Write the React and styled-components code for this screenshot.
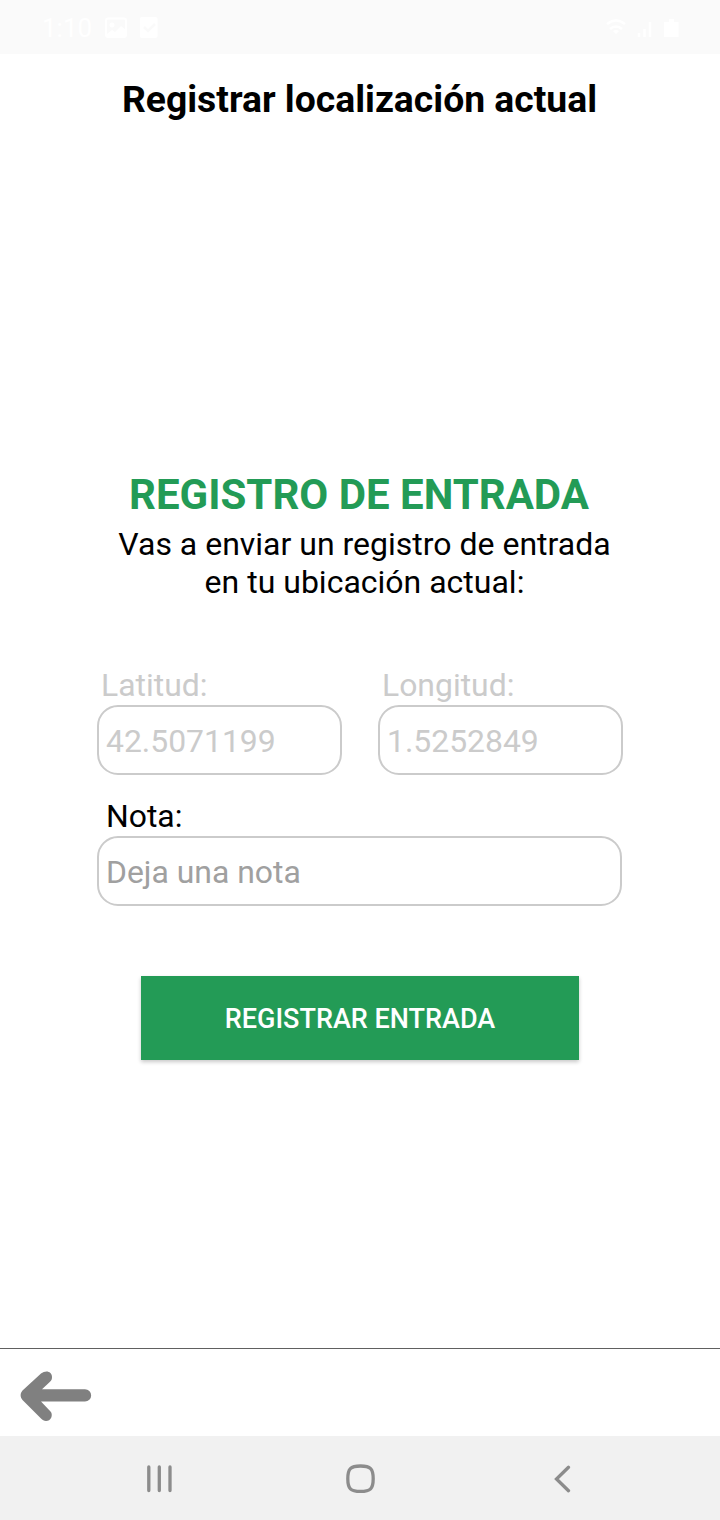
import React from 'react'
import styled, { createGlobalStyle } from 'styled-components';

const GlobalStyle = createGlobalStyle`
  body {
    margin: 0;
    background: #fff;
    font-family: Roboto, sans-serif;
  }
  * {
    box-sizing: border-box;
  }
`;

const Screen = styled.div`
  width: 720px;
  height: 1520px;
  display: flex;
  flex-direction: column;
  color: #000;
`;

const StatusBar = styled.header`
  height: 54px;
  flex: none;
  display: flex;
  justify-content: space-between;
  align-items: center;
  padding: 2px 41px 0 42px;
  background: #fafafa;
  color: #fff;
  font-size: 26px;
`;

const StatusGroup = styled.div`
  display: flex;
  align-items: center;
  gap: ${({ $gap }) => $gap}px;
`;

const Title = styled.h1`
  margin: 23px 0 0;
  padding-right: 1px;
  text-align: center;
  font-size: 37.3px;
  line-height: 44px;
  font-weight: 700;
`;

const Main = styled.main`
  flex: 1;
  padding: 349px 97px 0;
`;

const Heading = styled.h2`
  margin: 0;
  padding-right: 2px;
  text-align: center;
  color: #239b56;
  font-size: 42px;
  line-height: 50px;
  font-weight: 700;
`;

const Intro = styled.p`
  margin: 5px -9px 0 0;
  text-align: center;
  font-size: 32px;
  line-height: 38px;
`;

const Fields = styled.div`
  display: flex;
  gap: 36px;
  margin-top: 65px;
`;

const Field = styled.div`
  flex: 1;
`;

const Label = styled.label`
  display: block;
  padding-left: ${({ $indent }) => $indent}px;
  color: ${({ $muted }) => ($muted ? '#cbcbcb' : '#000')};
  font-size: 31.9px;
  line-height: 38px;
`;

const Input = styled.input`
  display: block;
  width: 100%;
  height: 70px;
  margin-top: 1px;
  padding: 2px 7px 0;
  border: 2px solid #cbcbcb;
  border-radius: 21px;
  background: #fff;
  color: #cbcbcb;
  font: 31.9px Roboto, sans-serif;
  &::placeholder {
    color: #a0a0a0;
    opacity: 1;
  }
`;

const NoteField = styled.div`
  margin-top: 22px;
  width: 525px;
`;

const SubmitButton = styled.button`
  display: block;
  width: 438px;
  height: 84px;
  margin: 70px auto 0;
  padding: 2px 0 0;
  border: 0;
  background: #239b56;
  color: #fff;
  font: 500 27px Roboto, sans-serif;
  box-shadow: 0 2px 4px rgba(0, 0, 0, 0.22);
`;

const Footer = styled.footer`
  height: 88px;
  padding: 22px 20px 0;
  border-top: 1px solid #606060;
`;

const NavBar = styled.nav`
  height: 84px;
  flex: none;
  display: flex;
  justify-content: space-between;
  align-items: center;
  padding: 2px 148px 0 145px;
  background: #f1f1f1;
`;

const NavIcon = styled.svg`
  display: block;
  fill: none;
  stroke: #8c8c8c;
  stroke-width: 3.3;
  stroke-linecap: round;
`;

const App = () => {
  return (
    <Screen>
      <GlobalStyle />
      <StatusBar>
        <StatusGroup $gap={13}>
          <span>1:10</span>
          <svg width="22" height="22" viewBox="0 0 22 22">
            <rect x="1" y="1.5" width="20" height="18.5" rx="2" fill="none" stroke="#fff" strokeWidth="2" />
            <circle cx="7" cy="8" r="2.5" fill="#fff" />
            <path d="M2 17l5-4 3 2 6-6 5 4v7H2z" fill="#fff" />
          </svg>
          <svg width="18" height="22" viewBox="0 0 18 22">
            <rect x="0" y="0" width="17.5" height="21" rx="2" fill="#fff" />
            <path d="M4 10l4 4 7-7" fill="none" stroke="#fafafa" strokeWidth="2.5" />
          </svg>
        </StatusGroup>
        <StatusGroup $gap={10}>
          <svg width="22" height="20" viewBox="0 0 22 20" fill="none" stroke="#fff" strokeWidth="2.5">
            <path d="M2 6q9-7 18 0M5 11q6-5 12 0" />
            <path d="M8 13q3-2 6 0l-3 3z" fill="#fff" stroke="none" />
          </svg>
          <svg width="17" height="20" viewBox="0 0 17 20" stroke="#fff" strokeWidth="2.5">
            <path d="M2 19v-4M7.5 19v-8M13 19V4" />
          </svg>
          <svg width="15" height="20" viewBox="0 0 15 20" fill="#fff">
            <path d="M5 1h5v3h4.5v15H0V4h5z" />
          </svg>
        </StatusGroup>
      </StatusBar>
      <Title>Registrar localización actual</Title>
      <Main>
        <Heading>REGISTRO DE ENTRADA</Heading>
        <Intro>
          Vas a enviar un registro de entrada
          <br />
          en tu ubicación actual:
        </Intro>
        <Fields>
          <Field>
            <Label htmlFor="lat" $indent={4} $muted>Latitud:</Label>
            <Input id="lat" value="42.5071199" readOnly />
          </Field>
          <Field>
            <Label htmlFor="lng" $indent={4} $muted>Longitud:</Label>
            <Input id="lng" value="1.5252849" readOnly />
          </Field>
        </Fields>
        <NoteField>
          <Label htmlFor="note" $indent={9}>Nota:</Label>
          <Input id="note" placeholder="Deja una nota" />
        </NoteField>
        <SubmitButton>REGISTRAR ENTRADA</SubmitButton>
      </Main>
      <Footer>
        <svg width="72" height="50" viewBox="0 0 72 50" fill="#808080">
          <path d="M2.500 19.500L21 2.500C26-1.500 32 .5 32 6c0 2-.5 3.500-2 4.800L22 18.300H65a6.100 6.100 0 0 1 0 12.300H21L30.500 40.500c1.500 1.500 1.500 4 .8 6-1 2.500-3 3.500-5.300 3.500-2 0-3.500-1-5-2.500L2.500 29C0 26 0 22.500 2.500 19.500z" />
        </svg>
      </Footer>
      <NavBar>
        <NavIcon width="28" height="28" viewBox="0 0 28 28">
          <path d="M3.800 2v23.500M14.300 2v23.500M25 2v23.500" />
        </NavIcon>
        <NavIcon width="33" height="30" viewBox="0 0 33 30">
          <path d="M14.500 2c10 0 12.700 2.700 12.700 12.700S24.500 27.400 14.500 27.400 1.800 24.700 1.800 14.700 4.500 2 14.500 2z" />
        </NavIcon>
        <NavIcon width="20" height="28" viewBox="0 0 20 28">
          <path d="M16.500 2.300L4.500 14l12 11.700" />
        </NavIcon>
      </NavBar>
    </Screen>
  )
}

export default App;
